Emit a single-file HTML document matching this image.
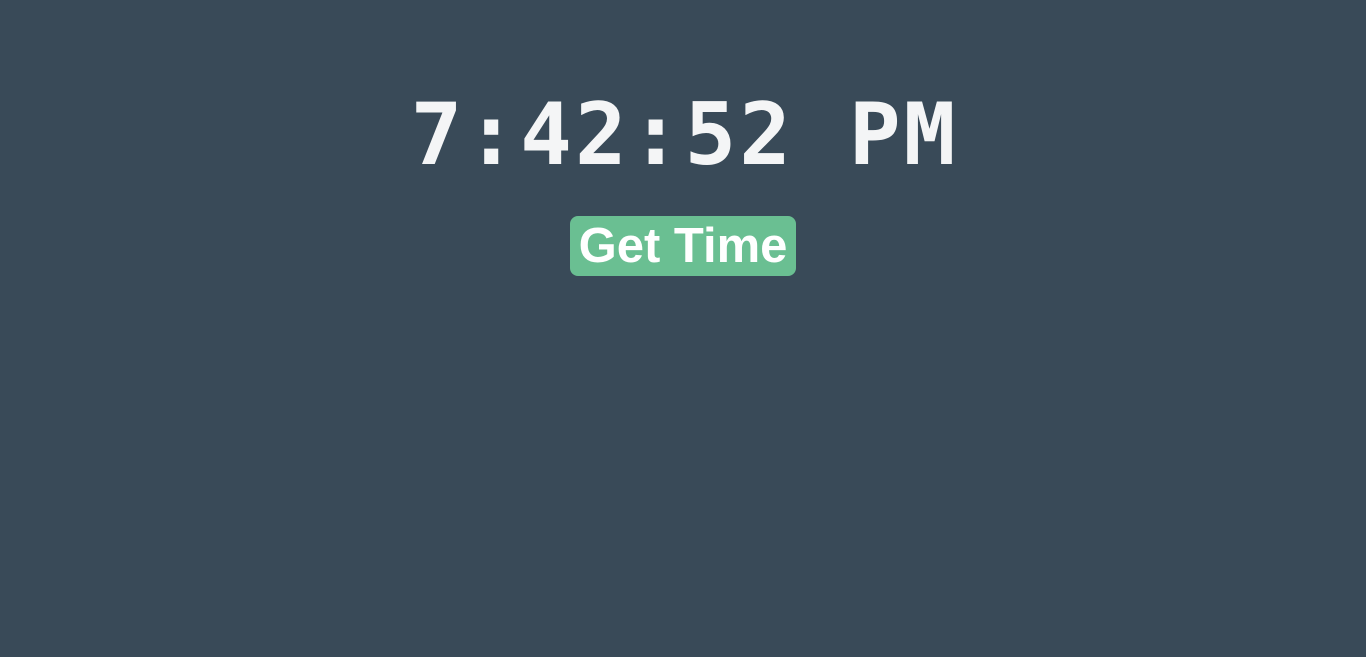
<!DOCTYPE html>
<html><head><meta charset="utf-8"><style>
html,body{margin:0;padding:0;width:1366px;height:657px;background:#394a58;overflow:hidden}
.t{position:absolute;left:0;width:1366px;top:80px;text-align:center;font-family:"DejaVu Sans Mono","Liberation Mono",monospace;font-weight:bold;font-size:86px;letter-spacing:3px;text-indent:3px;color:#f4f5f6;line-height:110px;white-space:nowrap}
.b{position:absolute;left:570px;top:216px;width:226px;height:60px;background:#6abf92;border-radius:8px;color:#fff;font-family:"Liberation Sans",Arial,sans-serif;font-weight:bold;font-size:49px;line-height:60px;text-align:center;white-space:nowrap}
</style></head><body>
<div class="t">7:42:52 PM</div>
<div class="b">Get Time</div>
</body></html>
